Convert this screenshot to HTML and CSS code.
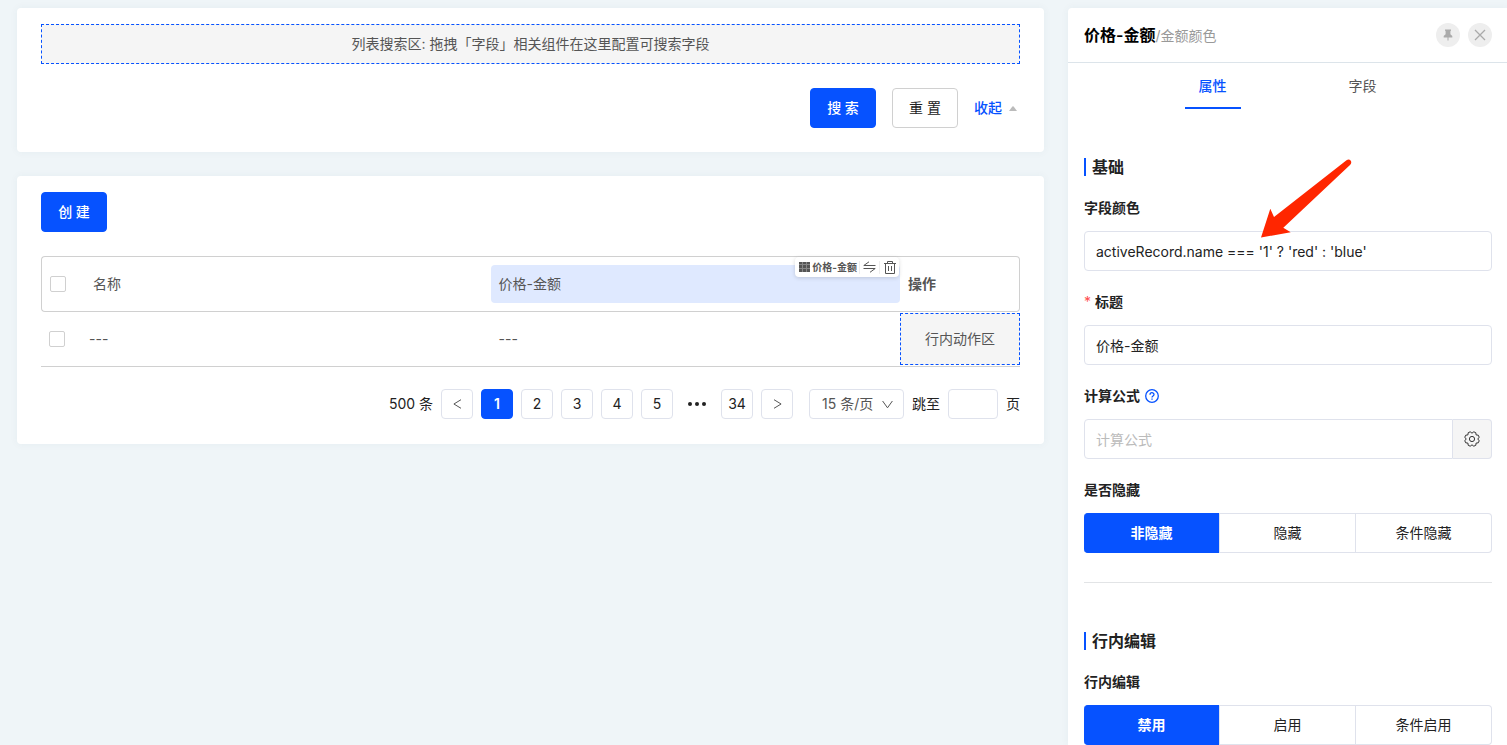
FILE: index.html
```html
<!DOCTYPE html>
<html lang="zh-CN">
<head>
<meta charset="utf-8">
<meta name="viewport" content="width=device-width, initial-scale=1">
<title>价格-金额</title>
<link rel="stylesheet" href="styles.css">
</head>
<body>
<div class="layout">
  <main class="main">
    <section class="card search-card">
      <div class="drop-zone">列表搜索区: 拖拽「字段」相关组件在这里配置可搜索字段</div>
      <div class="search-actions">
        <button type="button" class="btn btn-primary">搜 索</button>
        <button type="button" class="btn">重 置</button>
        <button type="button" class="btn-link">收起
          <svg class="caret" viewBox="0 0 8 5" aria-hidden="true"><path d="M0 5 3.4.6Q4 0 4.6.6L8 5Z"/></svg>
        </button>
      </div>
    </section>

    <section class="card list-card">
      <button type="button" class="btn btn-primary">创 建</button>
      <table class="table">
        <colgroup><col class="col-check"><col><col><col class="col-action"></colgroup>
        <thead>
          <tr>
            <th class="check-cell"><input type="checkbox" class="checkbox" aria-label="全选"></th>
            <th class="name-cell">名称</th>
            <th class="field-cell">
              <div class="field-active">价格-金额
                <div class="chip">
                  <svg class="chip-grid" viewBox="0 0 11 10" aria-hidden="true"><path d="M0 0h3v2H0zM4 0h3v2H4zM8 0h3v2H8zM0 3h3v3H0zM4 3h3v3H4zM8 3h3v3H8zM0 7h3v3H0zM4 7h3v3H4zM8 7h3v3H8z" fill="#555" stroke="none"/><path d="M3.500 0v10M7.500 0v10M0 2.500h11M0 6.500h11" stroke="#888" stroke-width="1"/></svg>
                  <span>价格-金额</span>
                  <button type="button" class="chip-btn" aria-label="替换"><svg width="13" height="12" viewBox="0 0 13 12"><path d="M6 .8 .8 4.500h11.700M.5 7.500h11.700L7 11.300"/></svg></button>
                  <button type="button" class="chip-btn" aria-label="删除"><svg width="12" height="13" viewBox="0 0 12 13"><path d="M0 2.500h12M3.500 2.500v-2h5v2M1.500 2.500v10h9v-10M4.500 5v5M7.500 5v5"/></svg></button>
                </div>
              </div>
            </th>
            <th class="action-head">操作</th>
          </tr>
        </thead>
        <tbody>
          <tr>
            <td class="check-cell"><input type="checkbox" class="checkbox" aria-label="选择行"></td>
            <td>---</td>
            <td>---</td>
            <td class="action-cell"><div class="action-zone">行内动作区</div></td>
          </tr>
        </tbody>
      </table>
      <nav class="pagination" aria-label="分页">
        <span>500 条</span>
        <button type="button" class="page" aria-label="上一页"><svg width="9" height="10" viewBox="0 0 9 10"><path d="M8 .7.9 5 8 9.300"/></svg></button>
        <button type="button" class="page page-current" aria-current="page">1</button>
        <button type="button" class="page">2</button>
        <button type="button" class="page">3</button>
        <button type="button" class="page">4</button>
        <button type="button" class="page">5</button>
        <span class="page-more"><i></i><i></i><i></i></span>
        <button type="button" class="page">34</button>
        <button type="button" class="page" aria-label="下一页"><svg width="9" height="10" viewBox="0 0 9 10"><path d="M1 .7 8.100 5 1 9.300"/></svg></button>
        <span class="page-size">
          <select aria-label="每页条数"><option>15 条/页</option></select>
          <svg width="11" height="9" viewBox="0 0 11 9" aria-hidden="true"><path d="M.6 1 5.500 7.800 10.400 1"/></svg>
        </span>
        <label class="jump">跳至<input type="text" class="jump-input" aria-label="页码">页</label>
      </nav>
    </section>
  </main>

  <aside class="panel">
    <header class="panel-head">
      <h1 class="panel-title">价格-金额<span>/金额颜色</span></h1>
      <div class="panel-tools">
        <button type="button" class="round-btn" aria-label="固定"><svg width="10" height="12" viewBox="0 0 10 12"><path d="M2 .5h6v1L7.400 2.200v3L9.300 7v1.400H.7V7l1.900-1.800v-3L2 1.500zM4.500 8.400h1V11.500h-1z" fill="#aaa" stroke="none"/></svg></button>
        <button type="button" class="round-btn" aria-label="关闭"><svg width="12" height="12" viewBox="0 0 12 12"><path d="M1 1 11 11M11 1 1 11" stroke-width="1.300"/></svg></button>
      </div>
    </header>
    <div class="tabs" role="tablist">
      <button type="button" role="tab" class="tab tab-active" aria-selected="true">属性</button>
      <button type="button" role="tab" class="tab" aria-selected="false">字段</button>
    </div>
    <form class="form">
      <section class="group">
        <h2 class="group-title">基础</h2>
        <div class="item">
          <label for="color">字段颜色</label>
          <input id="color" type="text" class="input" value="activeRecord.name === '1' ? 'red' : 'blue'">
        </div>
        <div class="item">
          <label for="title"><span class="required">*</span>标题</label>
          <input id="title" type="text" class="input" value="价格-金额">
        </div>
        <div class="item">
          <label for="formula">计算公式<svg class="help" viewBox="0 0 14 14" aria-hidden="true"><circle cx="7" cy="7" r="6.300"/><path d="M5 5.700C5 3 9 3.100 9 5.500 9 7 7 6.900 7 8.500M7 9.600v1.200"/></svg></label>
          <div class="input-group">
            <input id="formula" type="text" class="input" placeholder="计算公式">
            <button type="button" class="addon" aria-label="设置"><svg width="16" height="16" viewBox="0 0 16 16"><path d="M13.800 8 15.200 9.800 14.300 11.800 12.100 12.100 11.800 14.300 9.800 15.200 8 13.800 6.200 15.200 4.200 14.300 3.900 12.100 1.700 11.800 .8 9.800 2.200 8 .8 6.200 1.700 4.200 3.900 3.900 4.200 1.700 6.200 .8 8 2.200 9.800 .8 11.800 1.700 12.100 3.900 14.300 4.200 15.200 6.200Z" stroke-linejoin="round"/><circle cx="8" cy="8" r="2.600"/></svg></button>
          </div>
        </div>
        <fieldset class="item">
          <legend>是否隐藏</legend>
          <div class="segments">
            <label><input type="radio" name="hidden" checked><span>非隐藏</span></label>
            <label><input type="radio" name="hidden"><span>隐藏</span></label>
            <label><input type="radio" name="hidden"><span>条件隐藏</span></label>
          </div>
        </fieldset>
      </section>
      <hr class="divider">
      <section class="group">
        <h2 class="group-title">行内编辑</h2>
        <fieldset class="item">
          <legend>行内编辑</legend>
          <div class="segments">
            <label><input type="radio" name="inline" checked><span>禁用</span></label>
            <label><input type="radio" name="inline"><span>启用</span></label>
            <label><input type="radio" name="inline"><span>条件启用</span></label>
          </div>
        </fieldset>
      </section>
    </form>
    <svg class="arrow" viewBox="0 0 91 79" aria-hidden="true"><path d="M0 78.500 9.300 49.700 13 58 85.500 1.200Q88-.5 89.800 1.800 91 4 89 6L22.300 68.800 29.700 73.300Z"/></svg>
  </aside>
</div>
</body>
</html>
```

FILE: styles.css
```css
:root {
  --blue: #0652ff;
  --line: #dfe2ec;
  --gray-line: #d0d0d0;
  --text: #222;
  --muted: #555;
}

* {
  box-sizing: border-box;
}

body {
  margin: 0;
  background: #eff5f8;
  color: var(--text);
  font: 14px/22px Inter, "Noto Sans CJK SC", sans-serif;
}

button,
input,
select {
  margin: 0;
  font: inherit;
  color: inherit;
}

button {
  padding: 0;
  border: 0;
  background: none;
}

svg {
  fill: none;
  stroke: var(--muted);
}

.layout {
  display: grid;
  grid-template-columns: minmax(0, 1fr) 439px;
  padding-top: 8px;
  min-height: 100vh;
}

.main {
  display: flex;
  flex-direction: column;
  gap: 24px;
  padding: 0 24px 0 17px;
}

.card {
  display: flex;
  flex-direction: column;
  padding: 16px 24px 24px;
  background: #fff;
  border-radius: 4px;
  box-shadow: 0 0 8px rgba(30, 70, 90, 0.05);
}

.search-card {
  gap: 24px;
}

.drop-zone {
  height: 40px;
  border: 1px dashed var(--blue);
  background: #f5f5f5;
  color: var(--muted);
  line-height: 38px;
  text-align: center;
}

.search-actions {
  display: flex;
  justify-content: flex-end;
  gap: 16px;
}

.btn {
  height: 40px;
  padding: 0 16px;
  min-width: 66px;
  border: 1px solid var(--gray-line);
  border-radius: 4px;
  background: #fff;
}

.btn-primary {
  border-color: var(--blue);
  background: var(--blue);
  color: #fff;
  font-weight: 500;
}

.btn-link {
  display: flex;
  align-items: center;
  gap: 7px;
  padding-right: 3px;
  color: var(--blue);
  font-weight: 500;
}

.caret {
  width: 8px;
  height: 5px;
  fill: #bbb;
  stroke: none;
}

.list-card {
  padding-bottom: 25px;
}

.list-card > .btn {
  align-self: flex-start;
}

.table {
  width: 100%;
  margin: 24px 0 22px;
  table-layout: fixed;
  border-collapse: separate;
  border-spacing: 0;
  color: var(--muted);
  text-align: left;
}

.col-check {
  width: 40px;
}

.col-action {
  width: 120px;
}

.table th {
  height: 56px;
  padding: 0 8px;
  border: solid var(--gray-line);
  border-width: 1px 0;
  font-weight: 400;
}

.table th:first-child {
  border-left-width: 1px;
  border-radius: 4px 0 0 4px;
}

.table th:last-child {
  border-right-width: 1px;
  border-radius: 0 4px 4px 0;
}

.table .name-cell {
  padding-left: 12px;
}

.table .field-cell {
  padding: 0;
}

.table .action-head {
  font-weight: 700;
}

.table td {
  height: 55px;
  padding: 0 8px;
  border-bottom: 1px solid var(--gray-line);
}

.table .action-cell {
  padding: 0;
}

.checkbox {
  display: block;
  appearance: none;
  width: 16px;
  height: 16px;
  border: 1px solid var(--gray-line);
  border-radius: 2px;
  background: #fff;
}

.field-active {
  position: relative;
  height: 38px;
  padding: 0 8px;
  border-radius: 4px;
  background: #dfe9ff;
  line-height: 38px;
}

.chip {
  position: absolute;
  top: -8px;
  right: 1px;
  display: flex;
  align-items: center;
  height: 20px;
  padding-left: 4px;
  border-radius: 4px;
  background: #fff;
  box-shadow: 0 1px 4px rgba(0, 0, 0, 0.15);
  font-size: 10px;
  font-weight: 700;
  line-height: 20px;
}

.chip span {
  padding-right: 2px;
}

.chip-grid {
  width: 11px;
  height: 10px;
  margin-right: 2px;
}

.chip-btn {
  display: grid;
  place-items: center;
  width: 20px;
  height: 13px;
  border-left: 1px solid #eee;
}

.action-zone {
  height: 52px;
  border: 1px dashed var(--blue);
  background: #f5f5f5;
  line-height: 50px;
  text-align: center;
}

.pagination {
  display: flex;
  align-items: center;
  justify-content: flex-end;
  gap: 8px;
}

.page {
  display: grid;
  place-items: center;
  width: 32px;
  height: 30px;
  border: 1px solid var(--line);
  border-radius: 4px;
}

.page-current {
  border-color: var(--blue);
  background: var(--blue);
  color: #fff;
  font-weight: 600;
}

.page-more {
  display: flex;
  justify-content: center;
  gap: 3px;
  width: 32px;
}

.page-more i {
  width: 4px;
  height: 4px;
  border-radius: 50%;
  background: var(--text);
}

.page-size {
  position: relative;
  margin-left: 8px;
}

.page-size select {
  display: block;
  appearance: none;
  width: 95px;
  height: 30px;
  padding: 0 12px;
  border: 1px solid var(--line);
  border-radius: 4px;
  background: #fff;
  color: var(--muted);
}

.page-size svg {
  position: absolute;
  top: 11px;
  right: 11px;
  pointer-events: none;
}

.jump {
  display: flex;
  align-items: center;
  gap: 8px;
}

.jump-input {
  width: 50px;
  height: 30px;
  border: 1px solid var(--line);
  border-radius: 4px;
}

.panel {
  position: relative;
  background: #fff;
  border-radius: 4px 0 0 0;
  box-shadow: 0 0 8px rgba(30, 70, 90, 0.05);
}

.panel-head {
  display: flex;
  align-items: center;
  justify-content: space-between;
  height: 55px;
  padding: 0 15px 0 16px;
  border-bottom: 1px solid #dce4ea;
}

.panel-title {
  margin: 0;
  color: #000;
  font-size: 16px;
  font-weight: 600;
}

.panel-title span {
  color: #999;
  font-size: 14px;
  font-weight: 400;
}

.panel-tools {
  display: flex;
  gap: 8px;
}

.round-btn {
  display: grid;
  place-items: center;
  width: 24px;
  height: 24px;
  border-radius: 50%;
  background: #eee;
}

.round-btn svg {
  stroke: #aaa;
}

.tabs {
  display: flex;
  justify-content: center;
  gap: 94px;
}

.tab {
  width: 56px;
  height: 46px;
  padding-top: 2px;
  border-bottom: 2px solid transparent;
  color: var(--muted);
}

.tab-active {
  border-color: var(--blue);
  color: var(--blue);
  font-weight: 500;
}

.form {
  padding: 47px 15px 0 16px;
}

.group {
  display: flex;
  flex-direction: column;
}

.group-title {
  display: flex;
  align-items: center;
  gap: 6px;
  margin: 0 0 19px;
  font-size: 16px;
  font-weight: 600;
}

.group-title::before {
  width: 2px;
  height: 18px;
  background: var(--blue);
  content: "";
}

.item {
  display: block;
  min-width: 0;
  margin: 0;
  padding: 0;
  border: 0;
}

.item + .item {
  margin-top: 20px;
}

.item > label,
.item > legend {
  display: flex;
  align-items: center;
  padding: 0;
  margin-bottom: 12px;
  font-weight: 600;
}

.required {
  margin-right: 4px;
  color: #ff4d4f;
  font-weight: 400;
}

.help {
  width: 14px;
  height: 14px;
  margin-left: 5px;
  stroke: var(--blue);
  stroke-width: 1.3;
}

.input {
  display: block;
  width: 100%;
  height: 40px;
  padding: 0 11px;
  border: 1px solid var(--line);
  border-radius: 4px;
  background: #fff;
}

.input::placeholder {
  color: #bbb;
}

.input-group {
  display: flex;
}

.input-group .input {
  flex: 1;
  min-width: 0;
  border-radius: 4px 0 0 4px;
}

.addon {
  display: grid;
  place-items: center;
  width: 39px;
  height: 40px;
  border: 1px solid var(--line);
  border-left: 0;
  border-radius: 0 4px 4px 0;
  background: #f5f5f5;
}

.addon svg {
  stroke: #333;
}

.segments {
  display: grid;
  grid-template-columns: repeat(3, 1fr);
}

.segments label {
  position: relative;
}

.segments input {
  position: absolute;
  opacity: 0;
}

.segments span {
  display: block;
  height: 40px;
  border: 1px solid var(--line);
  border-left-width: 0;
  line-height: 38px;
  text-align: center;
}

.segments label:first-child span {
  border-radius: 4px 0 0 4px;
}

.segments label:last-child span {
  border-radius: 0 4px 4px 0;
}

.segments input:checked + span {
  border-color: var(--blue);
  border-right-width: 0;
  margin-right: 1px;
  background: var(--blue);
  color: #fff;
  font-weight: 600;
}

.segments label:has(input:checked) {
  background: linear-gradient(var(--line), var(--line)) right / 1px 100% no-repeat;
}

.divider {
  height: 1px;
  margin: 29px 0 47px;
  border: 0;
  background: #e2e4e6;
}

.arrow {
  position: absolute;
  top: 151px;
  left: 193px;
  width: 91px;
  height: 79px;
  fill: #ff2600;
  stroke: none;
  pointer-events: none;
}
```
